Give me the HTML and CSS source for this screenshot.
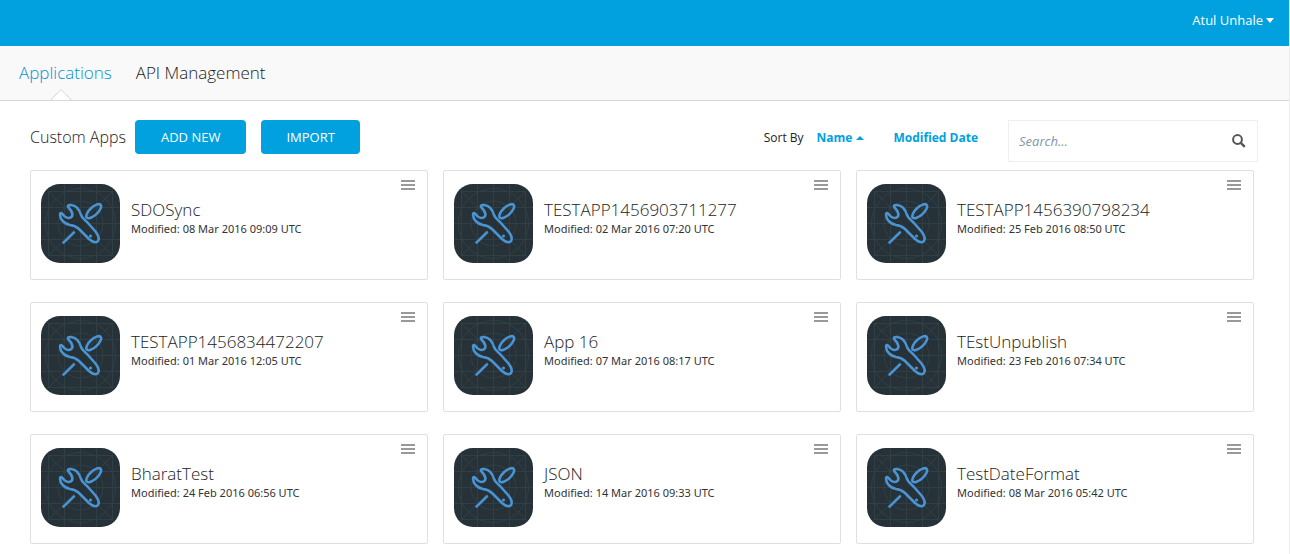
FILE: index.html
```html
<!DOCTYPE html>
<html lang="en">
<head>
<meta charset="utf-8">
<meta name="viewport" content="width=device-width, initial-scale=1">
<title>Applications</title>
<link rel="stylesheet" href="styles.css">
</head>
<body>
<svg class="defs" width="0" height="0" aria-hidden="true">
  <symbol id="tile" viewBox="0 0 79 79">
    <rect width="79" height="79" rx="19" fill="#263238"/>
    <g fill="none" stroke="#303f46" stroke-width="1">
      <path d="M7.500 8V71M23.500 0V79M39.500 0V79M55.500 0V79M71.500 8V71M8 7.500H71M0 23.500H79M0 39.500H79M0 55.500H79M8 71.500H71M6 6L73 73M73 6L6 73"/>
      <circle cx="39.500" cy="39.500" r="35"/>
      <circle cx="39.500" cy="39.500" r="22.500"/>
    </g>
    <g fill="none" stroke="#4a94d4" stroke-width="2.600" stroke-linecap="round" stroke-linejoin="round">
      <path fill="#263238" d="M27.500 23.500C26 21.500 28 20.800 30 21C35.500 21.500 38.500 26 40 31C41 34 43.500 35.500 46.500 38.500L54.500 47.500C57.500 51.500 58.500 55.500 56.500 57.500C54 59.500 51 57.500 48 55L38 45C35.500 42.500 33 41.500 29 41C23.500 40 19 35.500 19 30.500C19 28.500 20.500 28.500 21.500 30C23.500 33 27 35 29.800 33.300C33 31.500 31 27 27.500 23.500Z"/>
      <ellipse cx="52.700" cy="27.200" rx="9.400" ry="4" transform="rotate(-43 52.700 27.200)"/>
      <path d="M22.500 58.700L33 48.300"/>
    </g>
    <circle cx="49.500" cy="52" r="1.600" fill="#4a94d4"/>
  </symbol>
  <symbol id="menu" viewBox="0 0 14 10">
    <path d="M0 1H14M0 5H14M0 9H14" stroke="#999" stroke-width="2"/>
  </symbol>
</svg>

<header class="topbar">
  <button class="user" type="button">Atul Unhale <span class="caret caret-down"></span></button>
</header>
<nav class="tabs">
  <a class="tab tab-active" href="#applications">Applications</a>
  <a class="tab" href="#api">API Management</a>
</nav>

<main class="content">
  <div class="toolbar">
    <h1 class="heading">Custom Apps</h1>
    <button class="btn" type="button">ADD NEW</button>
    <button class="btn" type="button">IMPORT</button>
    <div class="sort">
      <span class="sort-label">Sort By</span>
      <a class="sort-link" href="#name">Name <span class="caret caret-up"></span></a>
      <a class="sort-link sort-date" href="#date">Modified Date</a>
    </div>
    <form class="search">
      <input class="search-input" type="text" placeholder="Search..." aria-label="Search">
      <button class="search-btn" type="button" aria-label="Search">
        <svg width="14" height="14" viewBox="0 0 14 14" fill="none" stroke="#555" stroke-width="2"><circle cx="5.500" cy="5.500" r="4.400"/><path d="M8.800 8.800L12.800 12.800" stroke-width="2.400"/></svg>
      </button>
    </form>
  </div>

  <div class="grid">
    <article class="card"><svg class="tile"><use href="#tile"/></svg><div class="info"><h2 class="name">SDOSync</h2><p class="date">Modified: 08 Mar 2016 09:09 UTC</p></div><button class="menu" type="button" aria-label="Menu"><svg width="14" height="10"><use href="#menu"/></svg></button></article>
    <article class="card"><svg class="tile"><use href="#tile"/></svg><div class="info"><h2 class="name">TESTAPP1456903711277</h2><p class="date">Modified: 02 Mar 2016 07:20 UTC</p></div><button class="menu" type="button" aria-label="Menu"><svg width="14" height="10"><use href="#menu"/></svg></button></article>
    <article class="card"><svg class="tile"><use href="#tile"/></svg><div class="info"><h2 class="name">TESTAPP1456390798234</h2><p class="date">Modified: 25 Feb 2016 08:50 UTC</p></div><button class="menu" type="button" aria-label="Menu"><svg width="14" height="10"><use href="#menu"/></svg></button></article>
    <article class="card"><svg class="tile"><use href="#tile"/></svg><div class="info"><h2 class="name">TESTAPP1456834472207</h2><p class="date">Modified: 01 Mar 2016 12:05 UTC</p></div><button class="menu" type="button" aria-label="Menu"><svg width="14" height="10"><use href="#menu"/></svg></button></article>
    <article class="card"><svg class="tile"><use href="#tile"/></svg><div class="info"><h2 class="name">App 16</h2><p class="date">Modified: 07 Mar 2016 08:17 UTC</p></div><button class="menu" type="button" aria-label="Menu"><svg width="14" height="10"><use href="#menu"/></svg></button></article>
    <article class="card"><svg class="tile"><use href="#tile"/></svg><div class="info"><h2 class="name">TEstUnpublish</h2><p class="date">Modified: 23 Feb 2016 07:34 UTC</p></div><button class="menu" type="button" aria-label="Menu"><svg width="14" height="10"><use href="#menu"/></svg></button></article>
    <article class="card"><svg class="tile"><use href="#tile"/></svg><div class="info"><h2 class="name">BharatTest</h2><p class="date">Modified: 24 Feb 2016 06:56 UTC</p></div><button class="menu" type="button" aria-label="Menu"><svg width="14" height="10"><use href="#menu"/></svg></button></article>
    <article class="card"><svg class="tile"><use href="#tile"/></svg><div class="info"><h2 class="name">JSON</h2><p class="date">Modified: 14 Mar 2016 09:33 UTC</p></div><button class="menu" type="button" aria-label="Menu"><svg width="14" height="10"><use href="#menu"/></svg></button></article>
    <article class="card"><svg class="tile"><use href="#tile"/></svg><div class="info"><h2 class="name">TestDateFormat</h2><p class="date">Modified: 08 Mar 2016 05:42 UTC</p></div><button class="menu" type="button" aria-label="Menu"><svg width="14" height="10"><use href="#menu"/></svg></button></article>
  </div>
</main>
</body>
</html>
```
FILE: styles.css
```css
* {
  box-sizing: border-box;
}

body {
  margin: 0;
  border-right: 1px solid #ececec;
  background: #fff;
  color: #222;
  font-family: "Open Sans", "Noto Sans", sans-serif;
  font-size: 12px;
}

button,
input {
  margin: 0;
  border: 0;
  background: none;
  font-family: inherit;
}

button {
  cursor: pointer;
}

a {
  color: inherit;
  text-decoration: none;
}

.defs {
  position: absolute;
}

.topbar {
  display: flex;
  justify-content: flex-end;
  height: 46px;
  padding: 10px 15px 0 0;
  background: #00a1de;
}

.user {
  display: flex;
  align-items: center;
  gap: 3px;
  height: 20px;
  padding: 0;
  color: #fff;
  font-size: 13px;
}

.caret {
  border: 4px solid transparent;
}

.caret-down {
  border-top: 5px solid #fff;
  border-bottom: 0;
}

.caret-up {
  border-top: 0;
  border-bottom: 4px solid #00a1de;
}

.tabs {
  display: flex;
  gap: 24px;
  height: 55px;
  padding-left: 19px;
  border-bottom: 1px solid #d9d9d9;
  background: #f9f9f9;
}

.tab {
  position: relative;
  font-size: 17px;
  font-weight: 300;
  line-height: 54px;
}

.tab-active {
  color: #0095d0;
}

/* Notch that points at the current tab */
.tab-active::after {
  content: "";
  position: absolute;
  bottom: -8px;
  left: 34px;
  width: 14px;
  height: 14px;
  border: 1px solid #d0d0d0;
  background: #fff;
  transform: rotate(45deg);
  clip-path: polygon(0 0, 100% 0, 0 100%);
}

.content {
  padding: 19px 35px 10px 30px;
}

.toolbar {
  display: flex;
  align-items: flex-start;
  margin-right: -4px;
  margin-bottom: 8px;
}

.heading {
  margin: 0 9px 0 0;
  font-size: 16px;
  font-weight: 300;
  line-height: 34px;
}

.btn {
  height: 34px;
  margin-right: 15px;
  padding: 0 26px;
  border-radius: 4px;
  background: #00a1de;
  color: #fff;
  font-size: 13px;
}

.btn + .btn {
  padding: 0 25px;
}

.sort {
  display: flex;
  margin-left: auto;
  line-height: 36px;
}

.sort-link {
  display: flex;
  align-items: center;
  gap: 4px;
  margin-left: 13px;
  color: #00a1de;
  font-weight: 700;
}

.sort-date {
  margin-left: 29px;
}

.search {
  display: flex;
  align-items: center;
  width: 250px;
  height: 42px;
  margin-left: 30px;
  border: 1px solid #efefef;
}

.search-input {
  flex: 1;
  min-width: 0;
  padding: 0 0 0 10px;
  outline: 0;
  color: #333;
  font-size: 13px;
}

.search-input::placeholder {
  color: #7d97b0;
  font-style: italic;
  opacity: 1;
}

.search-btn {
  display: flex;
  padding: 0 11px;
}

.grid {
  display: grid;
  grid-template-columns: repeat(3, 1fr);
  gap: 22px 15px;
}

.card {
  display: flex;
  align-items: flex-start;
  height: 110px;
  padding: 9px 12px 0 10px;
  border: 1px solid #e0e0e0;
  border-radius: 2px;
}

.tile {
  flex: none;
  width: 79px;
  height: 79px;
  margin-top: 4px;
}

.info {
  flex: 1;
  padding: 18px 0 0 11px;
}

.name {
  margin: 0;
  font-size: 17px;
  font-weight: 300;
  line-height: 24px;
}

.date {
  margin: 0;
  color: #333;
  font-family: "Noto Sans", "Open Sans", sans-serif;
  font-size: 11px;
  line-height: 14px;
}

.menu {
  display: flex;
  padding: 0;
}
```
